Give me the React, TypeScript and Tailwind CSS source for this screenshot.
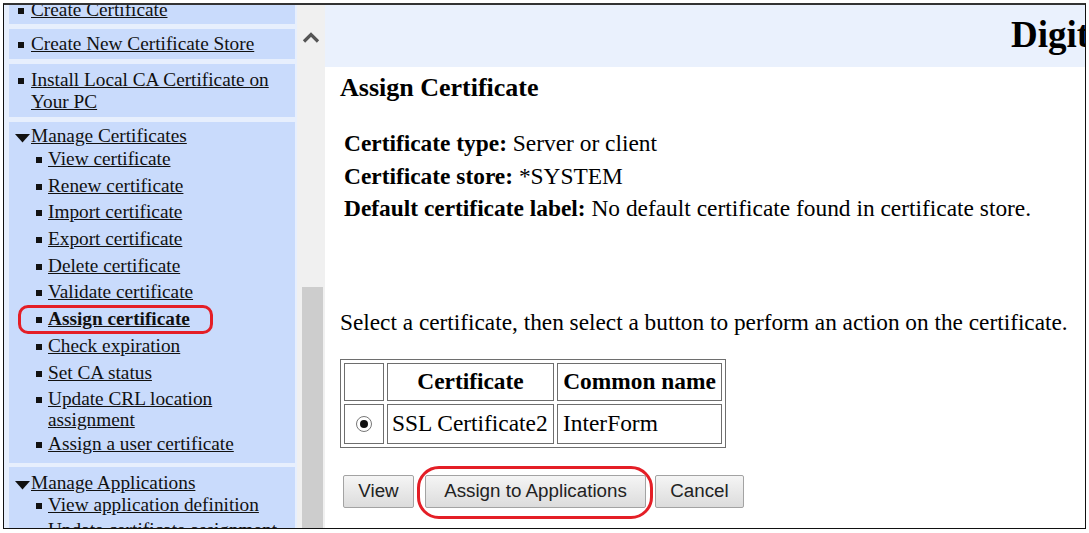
import React from 'react';

type NavItem = { label: string; bold?: boolean; pt: string; leading?: string };

const Bullet = () => <span className="inline-block w-[6px] h-[6px] bg-[#111] shrink-0 mt-[9px]" />;

const Triangle = () => (
  <svg width="15" height="9" viewBox="0 0 15 9" className="shrink-0 mt-[9px]">
    <polygon points="0,0 15,0 7.5,8.5" fill="#111" />
  </svg>
);

const TopItem = ({ label }: { label: string }) => (
  <div className="flex pl-[9px] gap-[7px] leading-[22px]">
    <Bullet />
    <a className="underline text-[#111]">{label}</a>
  </div>
);

const SubItem = ({ item }: { item: NavItem }) => (
  <div className={`flex pl-[27px] gap-[6px] ${item.pt} ${item.leading ?? 'leading-[22px]'}`}>
    <Bullet />
    <a className={`underline text-[#111] ${item.bold ? 'font-bold' : ''}`}>{item.label}</a>
  </div>
);

const certItems: NavItem[] = [
  { label: 'View certificate', pt: 'pt-[1px]' },
  { label: 'Renew certificate', pt: 'pt-[4.7px]' },
  { label: 'Import certificate', pt: 'pt-[4.7px]' },
  { label: 'Export certificate', pt: 'pt-[4.7px]' },
  { label: 'Delete certificate', pt: 'pt-[4.7px]' },
  { label: 'Validate certificate', pt: 'pt-[4.7px]' },
  { label: 'Assign certificate', bold: true, pt: 'pt-[4.7px]' },
  { label: 'Check expiration', pt: 'pt-[4.7px]' },
  { label: 'Set CA status', pt: 'pt-[4.7px]' },
  { label: 'Update CRL location assignment', pt: 'pt-[4.7px]', leading: 'leading-[21px]' },
  { label: 'Assign a user certificate', pt: 'pt-[3px]' },
];

const appItems: NavItem[] = [
  { label: 'View application definition', pt: 'pt-0' },
  { label: 'Update certificate assignment', pt: 'pt-[3px]' },
];

const Sidebar = () => (
  <aside className="w-[293px] shrink-0 bg-[#e7effd] overflow-hidden pl-[5px] pr-[2px] text-[19.3px]">
    {/* scrolled down a bit, first box is cut at the top */}
    <div className="-mt-[10px] flex flex-col">
      <div className="bg-[#c9dbfc] pt-[4px] pb-[3px]">
        <TopItem label="Create Certificate" />
      </div>
      <div className="bg-[#c9dbfc] py-[4px] mt-[5px]">
        <TopItem label="Create New Certificate Store" />
      </div>
      <div className="bg-[#c9dbfc] pt-[5px] pb-[4px] mt-[5px] pr-[10px]">
        <TopItem label="Install Local CA Certificate on Your PC" />
      </div>
      <div className="bg-[#c9dbfc] pt-[3px] pb-[7.7px] mt-[5px] pr-[4px]">
        <div className="flex pl-[6px] gap-[1px] leading-[22px]">
          <Triangle />
          <a className="underline text-[#111]">Manage Certificates</a>
        </div>
        {certItems.map((it) => (
          <SubItem key={it.label} item={it} />
        ))}
      </div>
      <div className="bg-[#c9dbfc] pt-[5px] pb-[6px] mt-[4px]">
        <div className="flex pl-[6px] gap-[1px] leading-[22px]">
          <Triangle />
          <a className="underline text-[#111]">Manage Applications</a>
        </div>
        {appItems.map((it) => (
          <SubItem key={it.label} item={it} />
        ))}
      </div>
    </div>
  </aside>
);

const ScrollTrack = () => (
  <div className="w-[28px] shrink-0 bg-[#f0f0f0] flex flex-col">
    <div className="flex justify-center mt-[27px]">
      <svg width="18" height="11" viewBox="0 0 18 11">
        <polyline points="2,9.5 9,2.5 16,9.5" fill="none" stroke="#555" strokeWidth="3.2" />
      </svg>
    </div>
    <div className="flex-1 mt-[244px] ml-[5px] w-[21px] bg-[#cdcdcd]" />
  </div>
);

const Btn = ({ label, w, ml }: { label: string; w: string; ml: string }) => (
  <button
    className={`${w} ${ml} h-[33px] border border-[#a3a3a3] rounded-[2px] bg-gradient-to-b from-[#f5f5f5] to-[#dcdcdc] text-[#222] text-[18.8px] font-['Liberation_Sans',Arial,sans-serif]`}
  >
    {label}
  </button>
);

export default function App() {
  return (
    <div className="relative w-[1089px] h-[533px] bg-white overflow-hidden font-['Liberation_Serif','Times_New_Roman',serif] text-black">
      <div className="ml-[3px] mt-[3px] w-[1083px] h-[526px] border-x border-b border-t-2 border-t-[#333] border-x-[#111] border-b-[#111] flex overflow-hidden">
        <Sidebar />
        <ScrollTrack />
        <main className="flex-1 min-w-0 flex flex-col overflow-hidden">
          <div className="h-[62px] shrink-0 bg-[#eaf1fd] flex items-center pl-[686px] pb-[3px] overflow-hidden">
            <span className="whitespace-nowrap font-bold text-[37px] leading-none">Digital Certificate Manager</span>
          </div>

          <div className="pl-[15px]">
            <h1 className="mt-[6px] font-bold text-[26px] leading-[30px]">Assign Certificate</h1>

            <div className="mt-[24px] pl-[4px] text-[23.4px] leading-[32.5px]">
              <div><b>Certificate type:</b> Server or client</div>
              <div><b>Certificate store:</b> *SYSTEM</div>
              <div className="whitespace-nowrap"><b>Default certificate label:</b> No default certificate found in certificate store.</div>
            </div>

            <p className="mt-[83px] text-[23.3px] leading-[28px] whitespace-nowrap">
              Select a certificate, then select a button to perform an action on the certificate.
            </p>

            <table className="mt-[23px] border border-[#6e6e6e] border-separate border-spacing-[3px] text-[23.4px]">
              <thead>
                <tr className="h-[38px]">
                  <th className="w-[40px] border border-[#6e6e6e]" />
                  <th className="w-[167px] border border-[#6e6e6e] font-bold text-center px-[3px]">Certificate</th>
                  <th className="w-[165px] border border-[#6e6e6e] font-bold text-center px-[2px] whitespace-nowrap">Common name</th>
                </tr>
              </thead>
              <tbody>
                <tr className="h-[40px]">
                  <td className="border border-[#6e6e6e]">
                    <div className="flex justify-center">
                      <span className="w-[16px] h-[16px] rounded-full border border-[#777] bg-white flex items-center justify-center">
                        <span className="w-[8px] h-[8px] rounded-full bg-[#111]" />
                      </span>
                    </div>
                  </td>
                  <td className="border border-[#6e6e6e] px-[4px] whitespace-nowrap">SSL Certificate2</td>
                  <td className="border border-[#6e6e6e] px-[5px] whitespace-nowrap">InterForm</td>
                </tr>
              </tbody>
            </table>

            <div className="mt-[27px] flex">
              <Btn label="View" w="w-[71px]" ml="ml-[3px]" />
              <Btn label="Assign to Applications" w="w-[221px]" ml="ml-[11px]" />
              <Btn label="Cancel" w="w-[89px]" ml="ml-[9px]" />
            </div>
          </div>
        </main>
      </div>

      {/* red highlight annotations */}
      <div className="absolute left-[18px] top-[305px] w-[195px] h-[29px] border-[3px] border-[#e41e26] rounded-[10px]" />
      <div className="absolute left-[417px] top-[466px] w-[236px] h-[53px] border-[3px] border-[#e41e26] rounded-[22px]" />
    </div>
  );
}
